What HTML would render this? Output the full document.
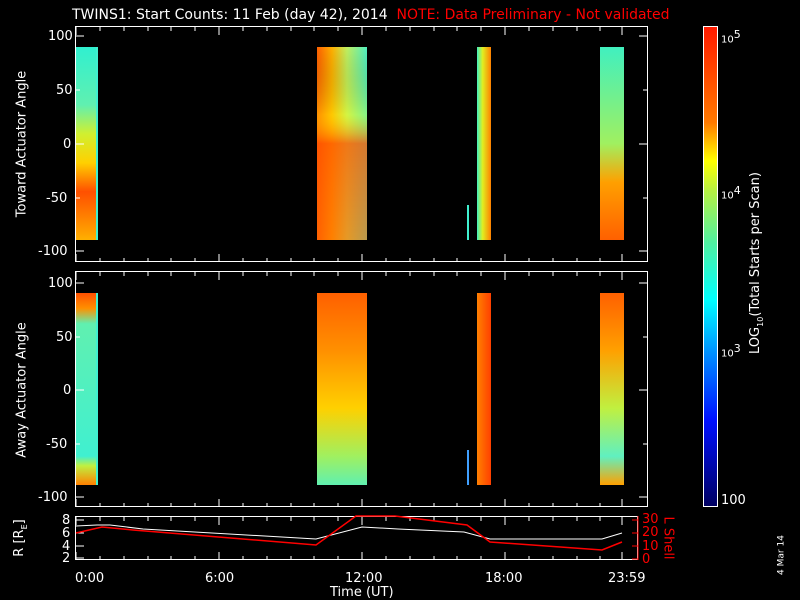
<!DOCTYPE html>
<html><head><style>
body{margin:0;background:#000;width:800px;height:600px;overflow:hidden;position:relative;font-family:"DejaVu Sans","Liberation Sans",sans-serif;color:#fff}
.a{position:absolute}
.t{position:absolute;font-size:13px;line-height:13px;white-space:nowrap}
</style></head><body>
<svg class="a" style="left:0;top:0" width="800" height="600">
<defs>
<linearGradient id="cb" x1="0" y1="0" x2="0" y2="1">
<stop offset="0" stop-color="#ff1a00"/><stop offset="0.2" stop-color="#ff7a00"/><stop offset="0.28" stop-color="#ffff00"/><stop offset="0.34" stop-color="#b8f040"/><stop offset="0.45" stop-color="#50f0a0"/><stop offset="0.57" stop-color="#00ffff"/><stop offset="0.68" stop-color="#0090ff"/><stop offset="0.82" stop-color="#0010ff"/><stop offset="1" stop-color="#000060"/></linearGradient>
<linearGradient id="s1" x1="0" y1="0" x2="0" y2="1"><stop offset="0" stop-color="#30f0d0"/><stop offset="0.3" stop-color="#60f0b0"/><stop offset="0.45" stop-color="#d0f030"/><stop offset="0.6" stop-color="#ffd000"/><stop offset="0.75" stop-color="#ff5000"/><stop offset="0.88" stop-color="#ff8000"/><stop offset="1" stop-color="#ffb000"/></linearGradient>
<linearGradient id="s2" x1="0" y1="0" x2="1" y2="0"><stop offset="0" stop-color="#ff6000"/><stop offset="0.3" stop-color="#ffb000"/><stop offset="0.6" stop-color="#c0f060"/><stop offset="1" stop-color="#50f0c0"/></linearGradient>
<linearGradient id="s2v" x1="0" y1="0" x2="0" y2="1"><stop offset="0" stop-color="#000" stop-opacity="0"/><stop offset="0.35" stop-color="#ff0" stop-opacity="0.3"/><stop offset="0.5" stop-color="#ff5000" stop-opacity="0.75"/><stop offset="1" stop-color="#ff6000" stop-opacity="0.6"/></linearGradient>
<linearGradient id="s3" x1="0" y1="0" x2="1" y2="0"><stop offset="0" stop-color="#40f0c0"/><stop offset="0.4" stop-color="#e0f020"/><stop offset="1" stop-color="#ff8000"/></linearGradient>
<linearGradient id="s4" x1="0" y1="0" x2="0" y2="1"><stop offset="0" stop-color="#40f0c0"/><stop offset="0.5" stop-color="#a0f060"/><stop offset="0.7" stop-color="#ffa000"/><stop offset="1" stop-color="#ff6000"/></linearGradient>
<linearGradient id="p1" x1="0" y1="0" x2="0" y2="1"><stop offset="0" stop-color="#ff5000"/><stop offset="0.08" stop-color="#ff9000"/><stop offset="0.16" stop-color="#60f0b0"/><stop offset="0.85" stop-color="#40f0d0"/><stop offset="0.9" stop-color="#c0f040"/><stop offset="1" stop-color="#ff8000"/></linearGradient>
<linearGradient id="p2" x1="0" y1="0" x2="0" y2="1"><stop offset="0" stop-color="#ff6000"/><stop offset="0.3" stop-color="#ff9000"/><stop offset="0.6" stop-color="#ffd000"/><stop offset="0.85" stop-color="#a0f060"/><stop offset="1" stop-color="#60f0b0"/></linearGradient>
<linearGradient id="p3" x1="0" y1="0" x2="1" y2="0"><stop offset="0" stop-color="#ff8000"/><stop offset="1" stop-color="#ff4000"/></linearGradient>
<linearGradient id="p4" x1="0" y1="0" x2="0" y2="1"><stop offset="0" stop-color="#ff6000"/><stop offset="0.3" stop-color="#ffa000"/><stop offset="0.6" stop-color="#c0f040"/><stop offset="0.85" stop-color="#60f0c0"/><stop offset="1" stop-color="#ffa000"/></linearGradient>
</defs>
<rect x="76" y="47" width="20" height="193" fill="url(#s1)"/><rect x="96" y="47" width="2" height="193" fill="#40f0d0"/>
<rect x="317" y="47" width="50" height="193" fill="url(#s2)"/><rect x="317" y="47" width="50" height="193" fill="url(#s2v)"/>
<rect x="467" y="205" width="2" height="35" fill="#40f0d0"/>
<rect x="477" y="47" width="14" height="193" fill="url(#s3)"/>
<rect x="600" y="47" width="24" height="193" fill="url(#s4)"/>
<rect x="76" y="293" width="20" height="192" fill="url(#p1)"/><rect x="96" y="293" width="2" height="192" fill="#40f0d0"/>
<rect x="317" y="293" width="50" height="192" fill="url(#p2)"/>
<rect x="467" y="450" width="2" height="35" fill="#40a0ff"/>
<rect x="477" y="293" width="14" height="192" fill="url(#p3)"/>
<rect x="600" y="293" width="24" height="192" fill="url(#p4)"/>
<g fill="none" stroke="#fff" stroke-width="1">
<rect x="75.5" y="26.5" width="572" height="235"/>
<rect x="75.5" y="271.5" width="572" height="235"/>
<rect x="75.5" y="516.5" width="562" height="43"/>
<rect x="703.5" y="26.5" width="14" height="480" fill="url(#cb)"/>
<path d="M76 36h8M76 90h4M76 144h8M76 198h4M76 251h8M647 36h-8M647 90h-4M647 144h-8M647 198h-4M647 251h-8"/>
<path d="M76 283h8M76 337h4M76 390h8M76 444h4M76 497h8M647 283h-8M647 337h-4M647 390h-8M647 444h-4M647 497h-8"/>
<path d="M76 262v-8M219 262v-8M362 262v-8M505 262v-8M622 262v-8M100 262v-4M124 262v-4M148 262v-4M171 262v-4M195 262v-4M243 262v-4M267 262v-4M291 262v-4M314 262v-4M338 262v-4M386 262v-4M410 262v-4M434 262v-4M457 262v-4M481 262v-4M529 262v-4M553 262v-4M577 262v-4M600 262v-4"/>
<path d="M76 27v8M219 27v8M362 27v8M505 27v8M622 27v8M100 27v4M124 27v4M148 27v4M171 27v4M195 27v4M243 27v4M267 27v4M291 27v4M314 27v4M338 27v4M386 27v4M410 27v4M434 27v4M457 27v4M481 27v4M529 27v4M553 27v4M577 27v4M600 27v4"/>
<path d="M76 507v-8M219 507v-8M362 507v-8M505 507v-8M622 507v-8M100 507v-4M124 507v-4M148 507v-4M171 507v-4M195 507v-4M243 507v-4M267 507v-4M291 507v-4M314 507v-4M338 507v-4M386 507v-4M410 507v-4M434 507v-4M457 507v-4M481 507v-4M529 507v-4M553 507v-4M577 507v-4M600 507v-4"/>
<path d="M76 272v8M219 272v8M362 272v8M505 272v8M622 272v8M100 272v4M124 272v4M148 272v4M171 272v4M195 272v4M243 272v4M267 272v4M291 272v4M314 272v4M338 272v4M386 272v4M410 272v4M434 272v4M457 272v4M481 272v4M529 272v4M553 272v4M577 272v4M600 272v4"/>
<path d="M76 560v-8M219 560v-8M362 560v-8M505 560v-8M622 560v-8M100 560v-4M124 560v-4M148 560v-4M171 560v-4M195 560v-4M243 560v-4M267 560v-4M291 560v-4M314 560v-4M338 560v-4M386 560v-4M410 560v-4M434 560v-4M457 560v-4M481 560v-4M529 560v-4M553 560v-4M577 560v-4M600 560v-4"/>
<path d="M76 517v8M219 517v8M362 517v8M505 517v8M622 517v8M100 517v4M124 517v4M148 517v4M171 517v4M195 517v4M243 517v4M267 517v4M291 517v4M314 517v4M338 517v4M386 517v4M410 517v4M434 517v4M457 517v4M481 517v4M529 517v4M553 517v4M577 517v4M600 517v4"/>
<path d="M76 520h8M76 533h8M76 546h8M76 558h8"/>
<polyline points="76,526 97,525 110,525 143,529 316,539 362,527 398,529 464,532 490,539 602,539 622,533"/>
</g>
<polyline fill="none" stroke="#f00" stroke-width="1.5" points="76,533 102,527 133,530 316,545 356,516 395,516 467,525 490,542 602,550 622,542"/>
<path d="M638 516v44M638 520h-6M638 533h-6M638 546h-6M638 559h-6" stroke="#f00" fill="none"/>
</svg>
<div class="t" style="left:72px;top:9px;font-size:14px">TWINS1: Start Counts: 11 Feb (day  42), 2014 <span style="color:#f00">&nbsp;NOTE: Data Preliminary - Not validated</span></div>
<div class="t" style="left:48px;top:30px">100</div><div class="t" style="left:56px;top:84px">50</div><div class="t" style="left:63px;top:138px">0</div><div class="t" style="left:46px;top:192px">-50</div><div class="t" style="left:38px;top:245px">-100</div>
<div class="t" style="left:48px;top:277px">100</div><div class="t" style="left:56px;top:331px">50</div><div class="t" style="left:63px;top:384px">0</div><div class="t" style="left:46px;top:438px">-50</div><div class="t" style="left:38px;top:491px">-100</div>
<div class="t" style="left:62px;top:514px">8</div><div class="t" style="left:62px;top:527px">6</div><div class="t" style="left:62px;top:540px">4</div><div class="t" style="left:62px;top:552px">2</div>
<div class="t" style="left:642px;top:513px;color:#f00">30</div><div class="t" style="left:642px;top:526px;color:#f00">20</div><div class="t" style="left:642px;top:540px;color:#f00">10</div><div class="t" style="left:642px;top:553px;color:#f00">0</div>
<div class="t" style="left:75px;top:572px">0:00</div><div class="t" style="left:205px;top:572px">6:00</div><div class="t" style="left:345px;top:572px">12:00</div><div class="t" style="left:485px;top:572px">18:00</div><div class="t" style="left:608px;top:572px">23:59</div>
<div class="t" style="left:330px;top:586px">Time (UT)</div>
<div class="t" style="left:721px;top:28px;font-size:10px">10<sup style="font-size:11px">5</sup></div>
<div class="t" style="left:721px;top:184px;font-size:10px">10<sup style="font-size:11px">4</sup></div>
<div class="t" style="left:721px;top:342px;font-size:10px">10<sup style="font-size:11px">3</sup></div>
<div class="t" style="left:721px;top:494px">100</div>
<div class="t" style="left:22px;top:144px;transform:translate(-50%,-50%) rotate(-90deg)">Toward Actuator Angle</div>
<div class="t" style="left:22px;top:390px;transform:translate(-50%,-50%) rotate(-90deg)">Away Actuator Angle</div>
<div class="t" style="left:22px;top:538px;transform:translate(-50%,-50%) rotate(-90deg)">R [R<sub style="font-size:8px">E</sub>]</div>
<div class="t" style="left:668px;top:538px;color:#f00;transform:translate(-50%,-50%) rotate(90deg)">L Shell</div>
<div class="t" style="left:758px;top:263px;transform:translate(-50%,-50%) rotate(-90deg)">LOG<sub style="font-size:8px">10</sub>(Total Starts per Scan)</div>
<div class="t" style="left:782px;top:555px;font-size:9px;transform:translate(-50%,-50%) rotate(-90deg)">4 Mar 14</div>
</body></html>
